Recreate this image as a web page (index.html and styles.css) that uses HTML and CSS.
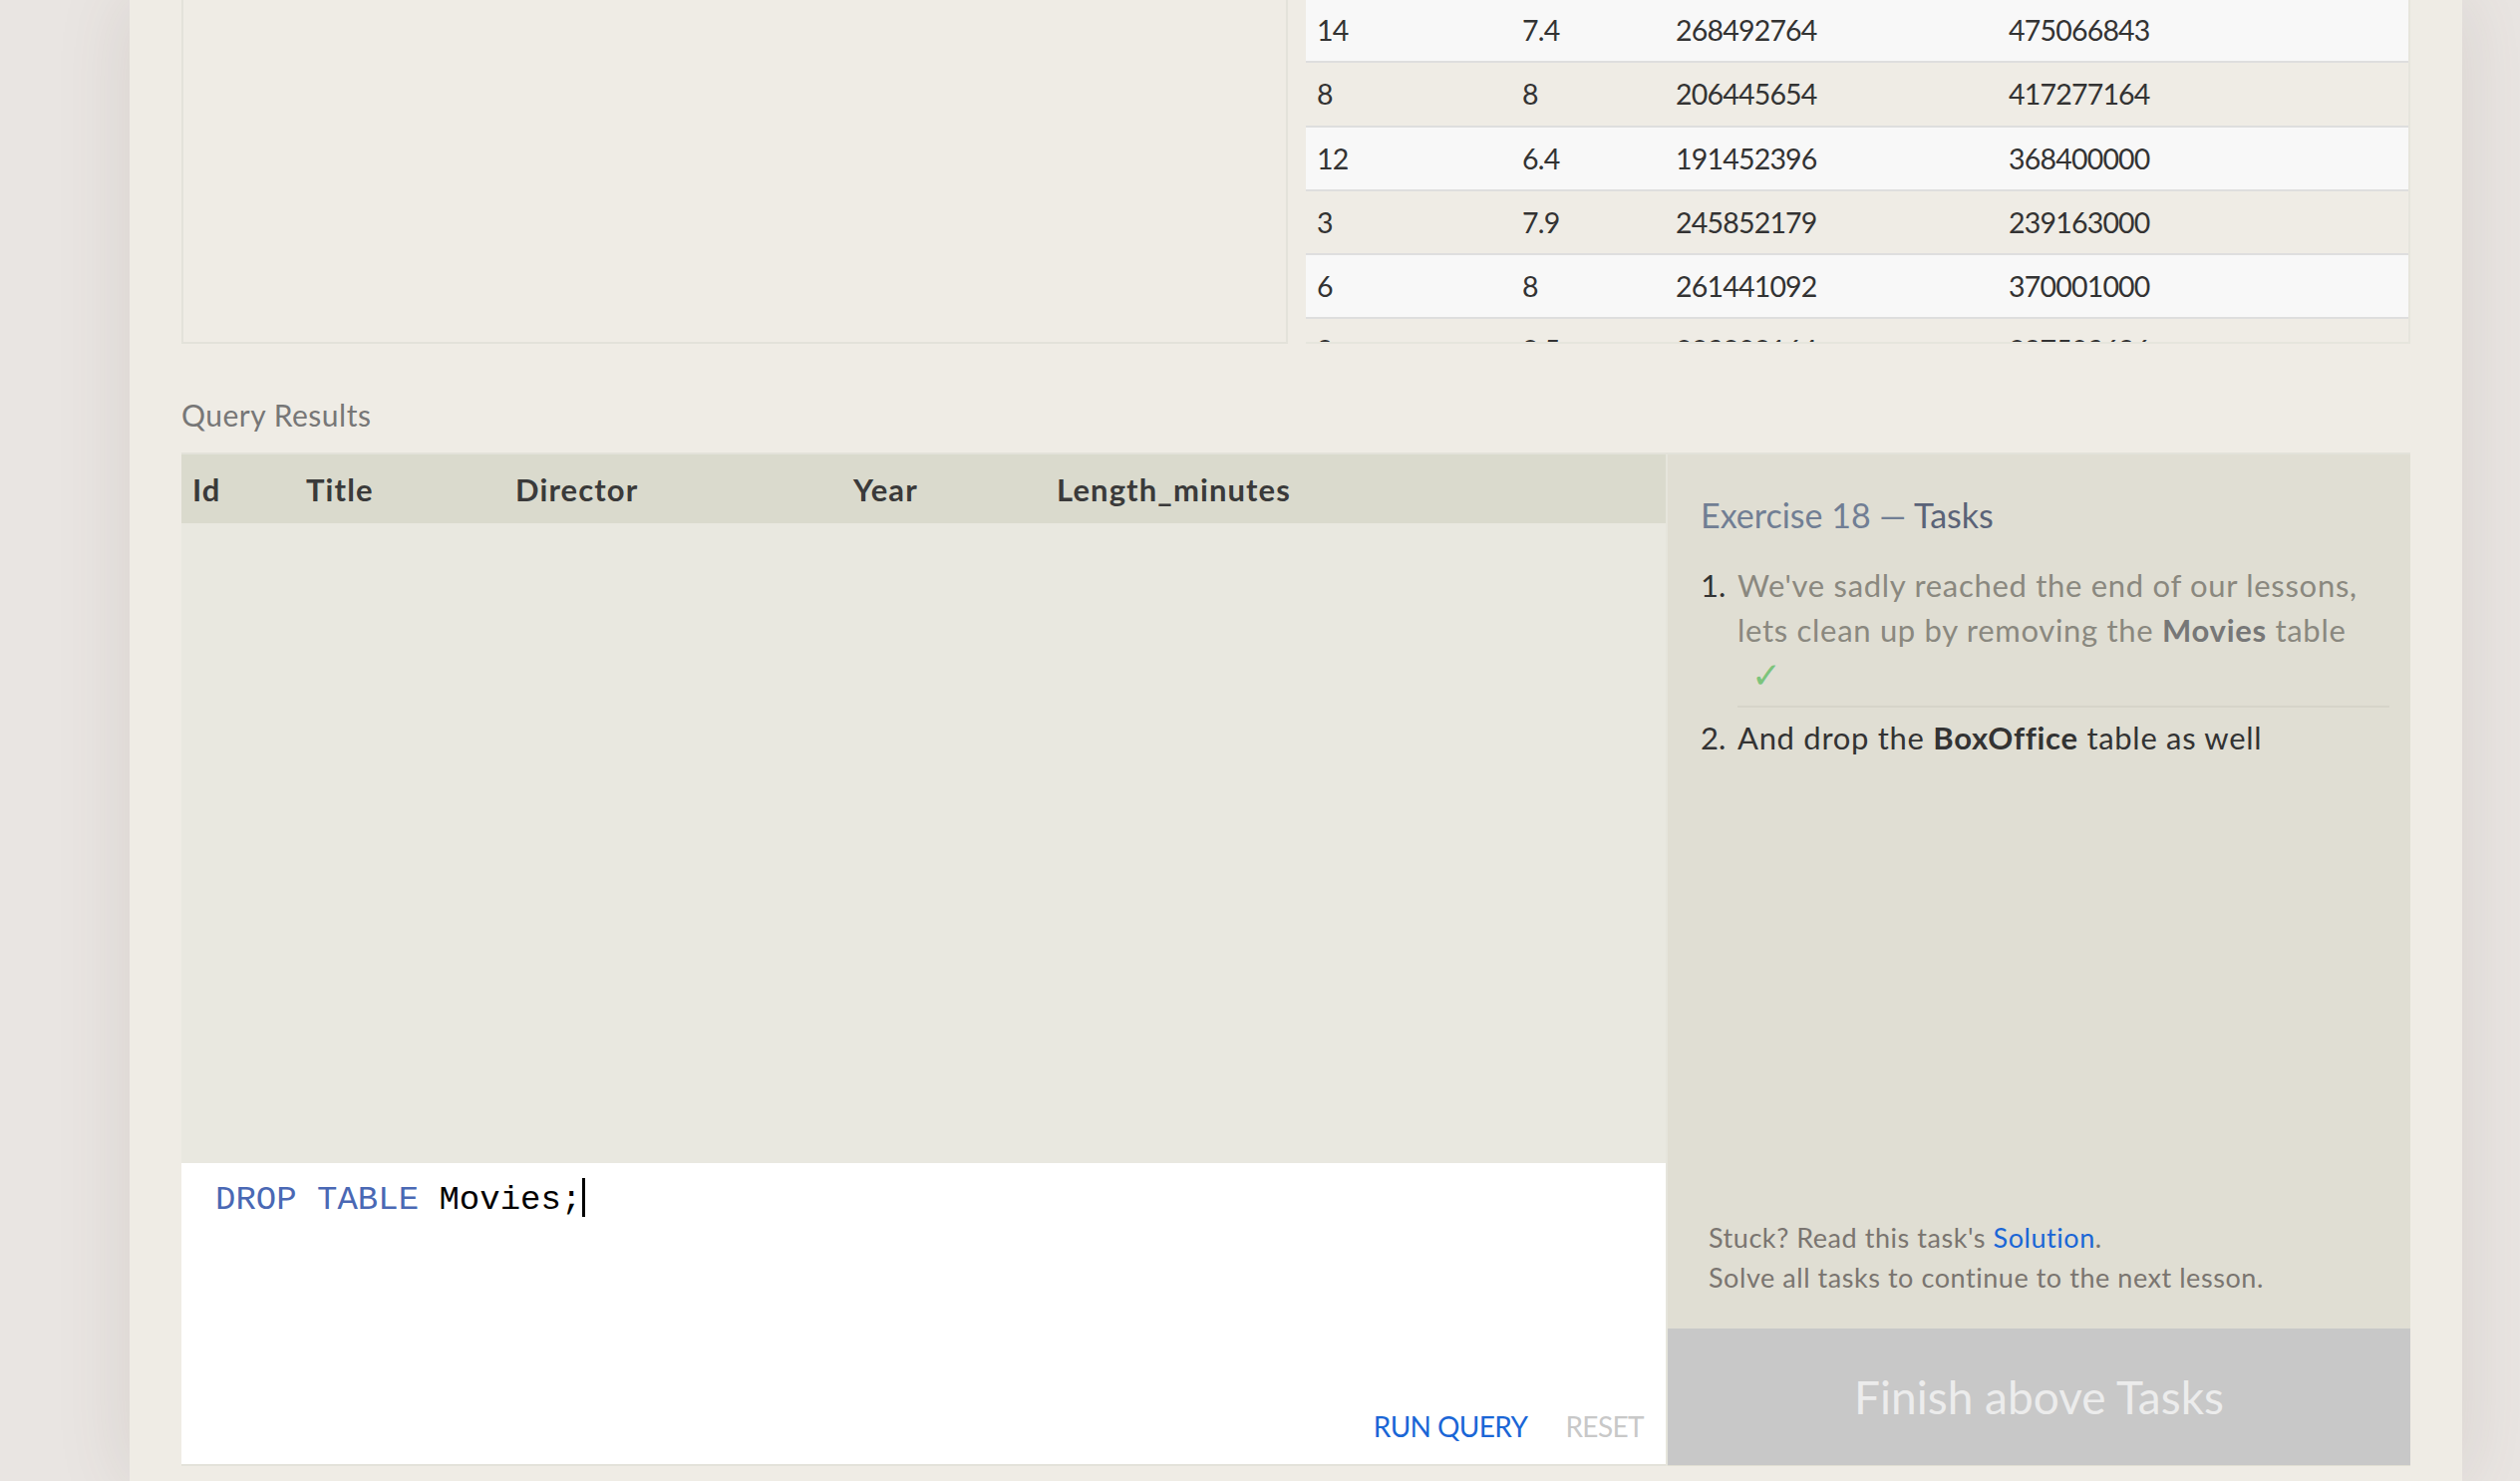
FILE: index.html
```html
<!DOCTYPE html>
<html>
<head>
<meta charset="utf-8">
<link rel="stylesheet" href="styles.css">
</head>
<body>
<div class="page">
  <div class="top">
    <div class="schema-panel"></div>
    <div class="data-wrap">
      <table class="data">
        <tr><td>14</td><td>7.4</td><td>268492764</td><td>475066843</td></tr>
        <tr><td>8</td><td>8</td><td>206445654</td><td>417277164</td></tr>
        <tr><td>12</td><td>6.4</td><td>191452396</td><td>368400000</td></tr>
        <tr><td>3</td><td>7.9</td><td>245852179</td><td>239163000</td></tr>
        <tr><td>6</td><td>8</td><td>261441092</td><td>370001000</td></tr>
        <tr><td>9</td><td>8.5</td><td>223808164</td><td>297503696</td></tr>
      </table>
    </div>
  </div>

  <div class="results-label">Query Results</div>

  <div class="results">
    <div class="results-main">
      <div class="results-head">
        <span>Id</span><span>Title</span><span>Director</span><span>Year</span><span>Length_minutes</span>
      </div>
      <div class="results-body"></div>
      <div class="editor">
        <div class="code"><span class="kw">DROP</span> <span class="kw">TABLE</span> Movies;<span class="cursor"></span></div>
        <div class="editor-actions">
          <span class="run">RUN QUERY</span>
          <span class="reset">RESET</span>
        </div>
      </div>
    </div>

    <div class="tasks">
      <div class="tasks-title">Exercise 18 — <span class="tasks-word">Tasks</span></div>
      <ol class="task-list">
        <li class="task done">
          <span class="num">1.</span>
          <div class="txt">We've sadly reached the end of our lessons, lets clean up by removing the <b>Movies</b> table <span class="check">✓</span></div>
        </li>
        <li class="task">
          <span class="num">2.</span>
          <div class="txt">And drop the <b>BoxOffice</b> table as well</div>
        </li>
      </ol>
      <div class="stuck">
        <div>Stuck? Read this task's <span class="solution">Solution</span>.</div>
        <div>Solve all tasks to continue to the next lesson.</div>
      </div>
      <div class="finish">Finish above Tasks</div>
    </div>
  </div>
</div>
</body>
</html>
```

FILE: styles.css
```css
html, body {
  margin: 0;
  padding: 0;
}
body {
  background: #e9e5e2;
  height: 1486px;
  overflow: hidden;
  font-family: "Lato", "Open Sans", sans-serif;
  color: #333;
}
.page {
  margin-left: 130px;
  width: 2236px;
  height: 1486px;
  padding: 0 52px;
  background: #efece5;
  box-shadow: 0 0 70px rgba(90, 70, 60, 0.13);
}
.top {
  display: grid;
  grid-template-columns: 1110px 1fr;
  column-gap: 18px;
  height: 345px;
}
.schema-panel {
  border: 2px solid #e3e2da;
  border-top: none;
  background: #efece5;
}
.data-wrap {
  overflow: hidden;
  border-right: 2px solid #e6e5dd;
  border-bottom: 2px solid #e6e5dd;
}
.data {
  width: 100%;
  border-collapse: collapse;
  margin-top: -1px;
  font-size: 28.5px;
  letter-spacing: -0.8px;
  color: #333;
  table-layout: fixed;
}
.data td {
  height: 62.25px;
  padding: 0 0 0 11px;
  border-bottom: 2px solid #dedede;
  white-space: nowrap;
}
.data td:nth-child(1) { width: 195px; }
.data td:nth-child(2) { width: 143px; }
.data td:nth-child(3) { width: 323px; }
.data tr:nth-child(odd) { background: #f8f8f8; }
.data tr:nth-child(even) { background: #efece5; }

.results-label {
  margin-top: 49px;
  height: 44px;
  line-height: 44px;
  font-size: 30px;
  letter-spacing: 0.5px;
  color: #777;
}
.results {
  margin-top: 16px;
  display: grid;
  grid-template-columns: 1489px 1fr;
  border-top: 2px solid #e3e2da;
  height: 1015px;
}
.results-main {
  display: flex;
  flex-direction: column;
}
.results-head {
  height: 69px;
  background: #dadacd;
  display: grid;
  grid-template-columns: 114px 210px 339px 204px 1fr;
  align-items: center;
  padding-left: 11px;
  font-size: 31px;
  letter-spacing: 1.1px;
  font-weight: bold;
  color: #3a3a3a;
}
.results-body {
  height: 642px;
  background: #e9e8e0;
}
.editor {
  flex: 1;
  background: #fff;
  border-bottom: 2px solid #e3e2da;
  display: flex;
  flex-direction: column;
  padding: 15px 22px 18px 34px;
}
.code {
  font-family: "Liberation Mono", monospace;
  font-size: 34px;
  line-height: 44px;
  color: #000;
  white-space: pre;
}
.kw { color: #4a68b4; }
.cursor {
  display: inline-block;
  width: 3px;
  height: 39px;
  background: #000;
  margin-left: 1px;
  vertical-align: -8px;
}
.editor-actions {
  margin-top: auto;
  display: flex;
  justify-content: flex-end;
  gap: 38px;
  line-height: 40px;
  font-size: 28px;
  letter-spacing: -0.6px;
}
.run { color: #1a66d6; }
.reset { color: #c8c8c8; }

.tasks {
  background: #e0ded3;
  border-left: 2px solid #e6e5dc;
  display: flex;
  flex-direction: column;
  padding-top: 38px;
  height: 1015px;
  box-sizing: border-box;
}
.tasks-title {
  padding-left: 33px;
  font-size: 34px;
  line-height: 45px;
  color: #717e94;
}
.tasks-word { color: #5a6378; }
.task-list {
  margin: 26px 21px 0 33px;
  padding: 0;
  list-style: none;
}
.task {
  display: flex;
  font-size: 31px;
  letter-spacing: 0.7px;
  line-height: 45px;
  color: #333;
}
.num {
  width: 37px;
  flex: none;
  color: #333;
  letter-spacing: 0;
}
.txt {
  flex: 1;
}
.task.done .txt {
  color: #8a887f;
  padding-bottom: 8px;
  border-bottom: 2px solid #d6d4c9;
}
.task.done b { color: #777; }
.task + .task { padding-top: 8px; }
.check {
  display: block;
  width: 30px;
  color: #7cc47c;
  margin-left: 14px;
  font-family: "DejaVu Sans", sans-serif;
  font-size: 36px;
  line-height: 45px;
}
.stuck {
  margin-top: auto;
  padding-left: 41px;
  font-size: 27px;
  letter-spacing: 0.55px;
  line-height: 40px;
  color: #7a7570;
  margin-bottom: 31px;
}
.solution { color: #1a66d6; }
.finish {
  height: 137px;
  background: #c8c8c8;
  color: #ececec;
  font-size: 46px;
  display: flex;
  align-items: center;
  justify-content: center;
  margin-bottom: 1px;
}
```
